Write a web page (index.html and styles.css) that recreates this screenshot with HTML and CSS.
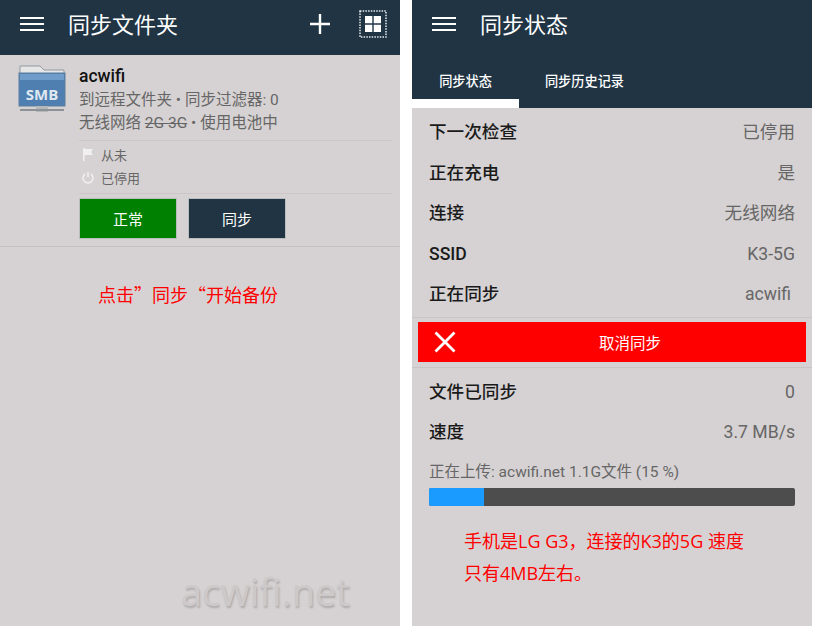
FILE: index.html
```html
<!DOCTYPE html>
<html lang="zh-CN">
<head>
    <meta charset="UTF-8">
    <title>同步文件夹</title>
    <link rel="stylesheet" href="styles.css">
</head>
<body>
    <div class="screens">
        <section class="phone">
            <header class="topbar">
                <svg class="menu-icon" width="24" height="16" viewBox="0 0 24 16"><path d="M0 2h24M0 8h24M0 14h24" stroke="#fff" stroke-width="2"/></svg>
                <h1 class="title">同步文件夹</h1>
                <svg class="plus-icon" width="22" height="22" viewBox="0 0 22 22"><path d="M11 1v20M1 11h20" stroke="#fff" stroke-width="2.4"/></svg>
                <svg class="grid-icon" width="28" height="28" viewBox="0 0 28 28">
                    <rect x="1" y="1" width="26" height="26" fill="none" stroke="#e8ecef" stroke-width="1.5" stroke-dasharray="1.5 1.2"/>
                    <path d="M6 6h7.300v7.300H6zM14.700 6H22v7.300h-7.300zM6 14.700h7.300V22H6zM14.700 14.700H22V22h-7.300z" fill="#fff"/>
                </svg>
            </header>

            <div class="folder">
                <svg class="smb-icon" width="50" height="52" viewBox="0 0 50 52">
                    <path d="M3 2h20l4 4h20v10H3z" fill="#e6e6e6" stroke="#8f9aa3"/>
                    <rect x="2" y="9" width="46" height="33" fill="#4f7fb0" stroke="#5d7f9f"/>
                    <rect x="3" y="10" width="44" height="6" fill="#6f9cc8"/>
                    <text x="25" y="36" class="smb-text">SMB</text>
                    <rect x="19" y="42" width="12" height="6" fill="#b4b8bb"/>
                    <rect x="3" y="45" width="44" height="2" fill="#8d9296"/>
                </svg>
                <div class="folder-body">
                    <div class="folder-name">acwifi</div>
                    <div class="folder-line">到远程文件夹 • 同步过滤器: 0</div>
                    <div class="folder-line">无线网络 <s>2G 3G</s> • 使用电池中</div>
                    <div class="folder-stats">
                        <div class="stat">
                            <svg width="12" height="13" viewBox="0 0 12 13"><path d="M1 0h1.500v13H1zM2.500 1H11L9 4l2 3H2.500z" fill="#f1f0f0"/></svg>
                            <span>从未</span>
                        </div>
                        <div class="stat">
                            <svg width="12" height="13" viewBox="0 0 12 13"><path d="M3.200 2.800a5 5 0 1 0 5.600 0" fill="none" stroke="#f1f0f0" stroke-width="1.500"/><path d="M6 1v5" stroke="#f1f0f0" stroke-width="1.500"/></svg>
                            <span>已停用</span>
                        </div>
                    </div>
                    <div class="folder-btns">
                        <button class="btn btn-green">正常</button>
                        <button class="btn btn-navy">同步</button>
                    </div>
                </div>
            </div>
            <p class="note note-left">点击”同步“开始备份</p>
            <div class="watermark">acwifi.net</div>
        </section>

        <section class="phone">
            <header class="topbar">
                <svg class="menu-icon" width="24" height="16" viewBox="0 0 24 16"><path d="M0 2h24M0 8h24M0 14h24" stroke="#fff" stroke-width="2"/></svg>
                <h1 class="title">同步状态</h1>
            </header>
            <nav class="tabs">
                <div class="tab tab-active">同步状态</div>
                <div class="tab">同步历史记录</div>
            </nav>

            <div class="rows rows-top">
                <div class="row"><b>下一次检查</b><span>已停用</span></div>
                <div class="row"><b>正在充电</b><span>是</span></div>
                <div class="row"><b>连接</b><span>无线网络</span></div>
                <div class="row"><b>SSID</b><span>K3-5G</span></div>
                <div class="row"><b>正在同步</b><span class="row-inset">acwifi</span></div>
            </div>

            <div class="cancel-wrap">
                <button class="cancel">
                    <svg width="22" height="22" viewBox="0 0 22 22"><path d="M1.500 1.500l19 19M20.500 1.500l-19 19" stroke="#fff" stroke-width="2.800"/></svg>
                    <span>取消同步</span>
                </button>
            </div>

            <div class="rows">
                <div class="row"><b>文件已同步</b><span>0</span></div>
                <div class="row"><b>速度</b><span>3.7 MB/s</span></div>
            </div>

            <div class="upload">
                <div class="upload-text">正在上传: acwifi.net 1.1G文件 (15 %)</div>
                <div class="progress"><div class="progress-fill" style="width: 15%"></div></div>
            </div>
            <p class="note note-right">手机是LG G3，连接的K3的5G 速度<br>只有4MB左右。</p>
        </section>
    </div>
</body>
</html>
```

FILE: styles.css
```css
* {
    margin: 0;
    padding: 0;
    box-sizing: border-box;
}
body {
    background-color: #fff;
    font-family: Roboto, "Noto Sans CJK SC", sans-serif;
}
.screens {
    display: flex;
    gap: 12px;
    width: 823px;
    height: 626px;
    overflow: hidden;
}
.phone {
    position: relative;
    width: 400px;
    height: 626px;
    background-color: #d6d2d3;
}
.topbar {
    display: flex;
    align-items: center;
    height: 55px;
    padding: 0 13px 7px 20px;
    background-color: #203444;
}
.title {
    margin: -3px 0 0 24px;
    flex: 1;
    font-size: 22px;
    font-weight: 400;
    color: #fff;
}
.grid-icon {
    margin-left: 28px;
}

/* left screen */
.folder {
    display: flex;
    padding: 9px 8px 7px 17px;
    border-bottom: 1px solid #c4c0c1;
}
.smb-icon {
    flex: none;
}
.smb-text {
    font-family: "Open Sans", sans-serif;
    font-size: 15px;
    font-weight: 700;
    fill: #dfe8f1;
    text-anchor: middle;
}
.folder-body {
    flex: 1;
    margin-left: 12px;
}
.folder-name {
    height: 25px;
    font-size: 17.500px;
    font-weight: 500;
    line-height: 24px;
    color: #111;
}
.folder-line {
    height: 23px;
    font-size: 15.500px;
    line-height: 23px;
    color: #666;
}
.folder-stats {
    margin-top: 5px;
    padding: 2px 0 4px;
    border-top: 1px solid #cbc7c8;
    border-bottom: 1px solid #cbc7c8;
}
.stat {
    display: flex;
    align-items: center;
    gap: 7px;
    height: 23px;
    padding-left: 3px;
    font-size: 13px;
    color: #666;
}
.folder-btns {
    display: flex;
    gap: 11px;
    margin-top: 4px;
}
.btn {
    width: 98px;
    height: 41px;
    border: 1px solid #b9bdbd;
    font-family: inherit;
    font-size: 15px;
    color: #fff;
}
.btn-green {
    background-color: #008000;
}
.btn-navy {
    background-color: #203444;
}
.note {
    font-family: "Noto Sans CJK SC", sans-serif;
    font-size: 18px;
    color: #f00;
}
.note-left {
    margin: 34px 0 0 98px;
    line-height: 26px;
}
.watermark {
    position: absolute;
    left: 181px;
    top: 565px;
    font-family: "Open Sans", sans-serif;
    font-size: 38px;
    color: #cdc9ca;
    text-shadow: 1px 2px 2px #aeaaab;
}

/* right screen */
.tabs {
    display: flex;
    height: 53px;
    background-color: #203444;
}
.tab {
    width: 107px;
    height: 44px;
    padding-top: 15px;
    font-size: 13.200px;
    font-weight: 500;
    line-height: 24px;
    text-align: center;
    color: #fff;
}
.tab:nth-child(2) {
    margin-left: 12px;
}
.tab-active {
    height: 53px;
    border-bottom: 9px solid #fff;
}
.rows {
    padding: 3px 17px 0;
}
.rows-top {
    padding-bottom: 3px;
    border-bottom: 1px solid #c9c5c6;
}
.row {
    display: flex;
    justify-content: space-between;
    align-items: baseline;
    height: 40.500px;
    font-size: 17.600px;
    line-height: 42px;
    color: #666;
}
.row b {
    font-weight: 500;
    color: #1a1a1a;
}
.row-inset {
    margin-right: 4px;
}
.cancel-wrap {
    padding: 4px 6px 5px;
    border-bottom: 1px solid #c9c5c6;
}
.cancel {
    display: flex;
    align-items: center;
    width: 388px;
    height: 40px;
    padding-left: 16px;
    border: none;
    background-color: #f00;
    font-family: inherit;
    font-size: 15.500px;
    color: #fff;
}
.cancel span {
    margin-left: 143px;
}
.upload {
    margin-top: 7px;
    padding: 0 17px;
}
.upload-text {
    height: 26px;
    font-size: 15.500px;
    line-height: 27px;
    color: #666;
}
.progress {
    height: 18px;
    margin-top: 3px;
    border-radius: 2px;
    overflow: hidden;
    background-color: #4d4d4d;
}
.progress-fill {
    height: 100%;
    background-color: #1a9bff;
}
.note-right {
    margin: 19px 0 0 52px;
    font-family: "Open Sans", "Noto Sans CJK SC", sans-serif;
    line-height: 32px;
}
```
